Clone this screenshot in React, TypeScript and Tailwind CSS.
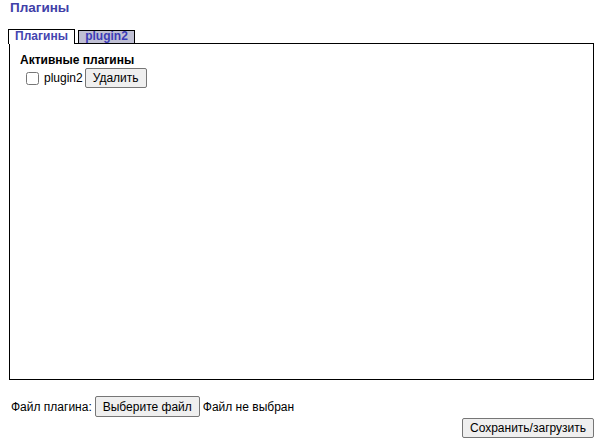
import React from "react";

export default function App() {
  return (
    <div className="w-[606px] h-[445px] bg-white text-[12px] text-black" style={{ fontFamily: '"Liberation Sans", Arial, sans-serif' }}>
      <div className="pl-[10px] text-[13.5px] font-bold text-[#4040a8] leading-[15px]">Плагины</div>
      <div className="ml-[9px] mt-[14px] w-[585px]">
        <div className="flex items-end h-[14px]">
          <div className="relative z-10 h-[15px] w-[67px] ml-[-1px] border border-b-0 border-black bg-white text-center text-[12px] font-bold text-[#4444b0] leading-[13px] -mb-px">Плагины</div>
          <div className="relative z-10 ml-[3px] h-[13px] w-[57px] border border-b-0 border-black bg-[#c0c0d4] text-center text-[12px] font-bold text-[#3c3cb8] leading-[10px]">plugin2</div>
        </div>
        <div className="h-[337px] border border-black px-[10px] pt-[9px]">
          <div className="font-bold leading-[14px]">Активные плагины</div>
          <div className="flex items-center mt-[1px] ml-[6px]">
            <input type="checkbox" className="w-[13px] h-[13px] m-0 mr-[5px]" />
            <span>plugin2</span>
            <button className="ml-[2px] h-[20px] px-[7px] border border-[#767676] rounded-[2px] bg-[#efefef] text-[12px] leading-[16px]">Удалить</button>
          </div>
        </div>
      </div>
      <div className="flex items-center ml-[11px] mt-[16px]">
        <span>Файл плагина:</span>
        <button className="ml-[3px] h-[21px] px-[7px] border border-[#767676] rounded-[2px] bg-[#efefef] text-[12px]">Выберите файл</button>
        <span className="ml-[3px]">Файл не выбран</span>
      </div>
      <div className="flex justify-end pr-[12px] mt-[1px]">
        <button className="h-[20px] px-[7px] border border-[#767676] rounded-[2px] bg-[#efefef] text-[12px] leading-[16px]">Сохранить/загрузить</button>
      </div>
    </div>
  );
}
